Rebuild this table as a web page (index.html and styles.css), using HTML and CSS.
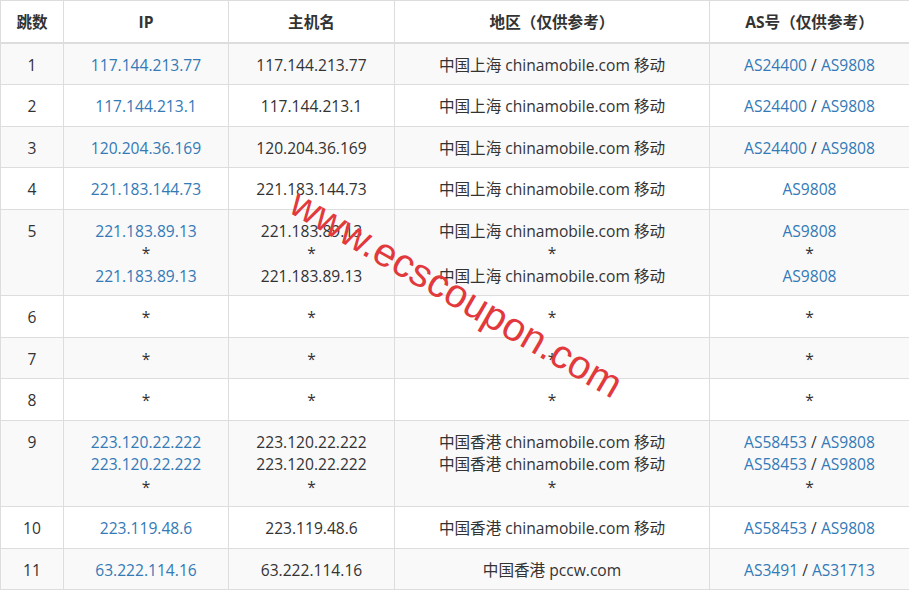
FILE: index.html
```html
<!DOCTYPE html>
<html lang="zh-CN">
<head>
  <meta charset="UTF-8" />
  <meta name="viewport" content="width=device-width, initial-scale=1.0"/>
  <title>路由追踪</title>
  <link rel="stylesheet" href="styles.css">
</head>
<body>
  <div class="wrap">
    <table class="trace">
      <thead>
        <tr>
          <th class="col-hop">跳数</th>
          <th class="col-ip">IP</th>
          <th class="col-host">主机名</th>
          <th class="col-geo">地区（仅供参考）</th>
          <th class="col-as">AS号（仅供参考）</th>
        </tr>
      </thead>
      <tbody>
        <tr>
          <td>1</td>
          <td><a href="#">117.144.213.77</a></td>
          <td>117.144.213.77</td>
          <td>中国上海 chinamobile.com 移动</td>
          <td><a href="#">AS24400</a> / <a href="#">AS9808</a></td>
        </tr>
        <tr>
          <td>2</td>
          <td><a href="#">117.144.213.1</a></td>
          <td>117.144.213.1</td>
          <td>中国上海 chinamobile.com 移动</td>
          <td><a href="#">AS24400</a> / <a href="#">AS9808</a></td>
        </tr>
        <tr>
          <td>3</td>
          <td><a href="#">120.204.36.169</a></td>
          <td>120.204.36.169</td>
          <td>中国上海 chinamobile.com 移动</td>
          <td><a href="#">AS24400</a> / <a href="#">AS9808</a></td>
        </tr>
        <tr>
          <td>4</td>
          <td><a href="#">221.183.144.73</a></td>
          <td>221.183.144.73</td>
          <td>中国上海 chinamobile.com 移动</td>
          <td><a href="#">AS9808</a></td>
        </tr>
        <tr>
          <td>5</td>
          <td><a href="#">221.183.89.13</a><br>*<br><a href="#">221.183.89.13</a></td>
          <td>221.183.89.13<br>*<br>221.183.89.13</td>
          <td>中国上海 chinamobile.com 移动<br>*<br>中国上海 chinamobile.com 移动</td>
          <td><a href="#">AS9808</a><br>*<br><a href="#">AS9808</a></td>
        </tr>
        <tr>
          <td>6</td>
          <td>*</td>
          <td>*</td>
          <td>*</td>
          <td>*</td>
        </tr>
        <tr>
          <td>7</td>
          <td>*</td>
          <td>*</td>
          <td>*</td>
          <td>*</td>
        </tr>
        <tr>
          <td>8</td>
          <td>*</td>
          <td>*</td>
          <td>*</td>
          <td>*</td>
        </tr>
        <tr>
          <td>9</td>
          <td><a href="#">223.120.22.222</a><br><a href="#">223.120.22.222</a><br>*</td>
          <td>223.120.22.222<br>223.120.22.222<br>*</td>
          <td>中国香港 chinamobile.com 移动<br>中国香港 chinamobile.com 移动<br>*</td>
          <td><a href="#">AS58453</a> / <a href="#">AS9808</a><br><a href="#">AS58453</a> / <a href="#">AS9808</a><br>*</td>
        </tr>
        <tr>
          <td>10</td>
          <td><a href="#">223.119.48.6</a></td>
          <td>223.119.48.6</td>
          <td>中国香港 chinamobile.com 移动</td>
          <td><a href="#">AS58453</a> / <a href="#">AS9808</a></td>
        </tr>
        <tr>
          <td>11</td>
          <td><a href="#">63.222.114.16</a></td>
          <td>63.222.114.16</td>
          <td>中国香港 pccw.com</td>
          <td><a href="#">AS3491</a> / <a href="#">AS31713</a></td>
        </tr>
      </tbody>
    </table>

    <!-- watermark -->
    <div class="watermark">www.ecscoupon.com</div>
  </div>
</body>
</html>
```

FILE: styles.css
```css
* {
  box-sizing: border-box;
  margin: 0;
  padding: 0;
}

body {
  background: #fff;
  font-family: 'Open Sans', 'Noto Sans CJK SC', sans-serif;
  font-size: 15.6px;
  color: #333;
}

.wrap {
  position: relative;
  width: 909px;
  overflow: hidden;
}

.trace {
  width: 909px;
  border-collapse: collapse;
  table-layout: fixed;
  border: 1px solid #ddd;
}

.trace th,
.trace td {
  border: 1px solid #ddd;
  padding: 10px 6px 8px;
  line-height: 22.5px;
  text-align: center;
  vertical-align: top;
  white-space: nowrap;
}

.trace th {
  font-weight: 700;
  border-bottom: 2px solid #ddd;
}

.trace tbody tr:nth-child(odd) {
  background: #f9f9f9;
}

.trace a {
  color: #337ab7;
  text-decoration: none;
}

.col-hop { width: 63px; }
.col-ip { width: 165px; }
.col-host { width: 166px; }
.col-geo { width: 315px; }
.col-as { width: 200px; }

.watermark {
  position: absolute;
  left: 305px;
  top: 180px;
  font-family: 'Liberation Sans', sans-serif;
  font-size: 40px;
  color: #e2393c;
  transform: rotate(30deg);
  transform-origin: left top;
  pointer-events: none;
  white-space: nowrap;
}
```
